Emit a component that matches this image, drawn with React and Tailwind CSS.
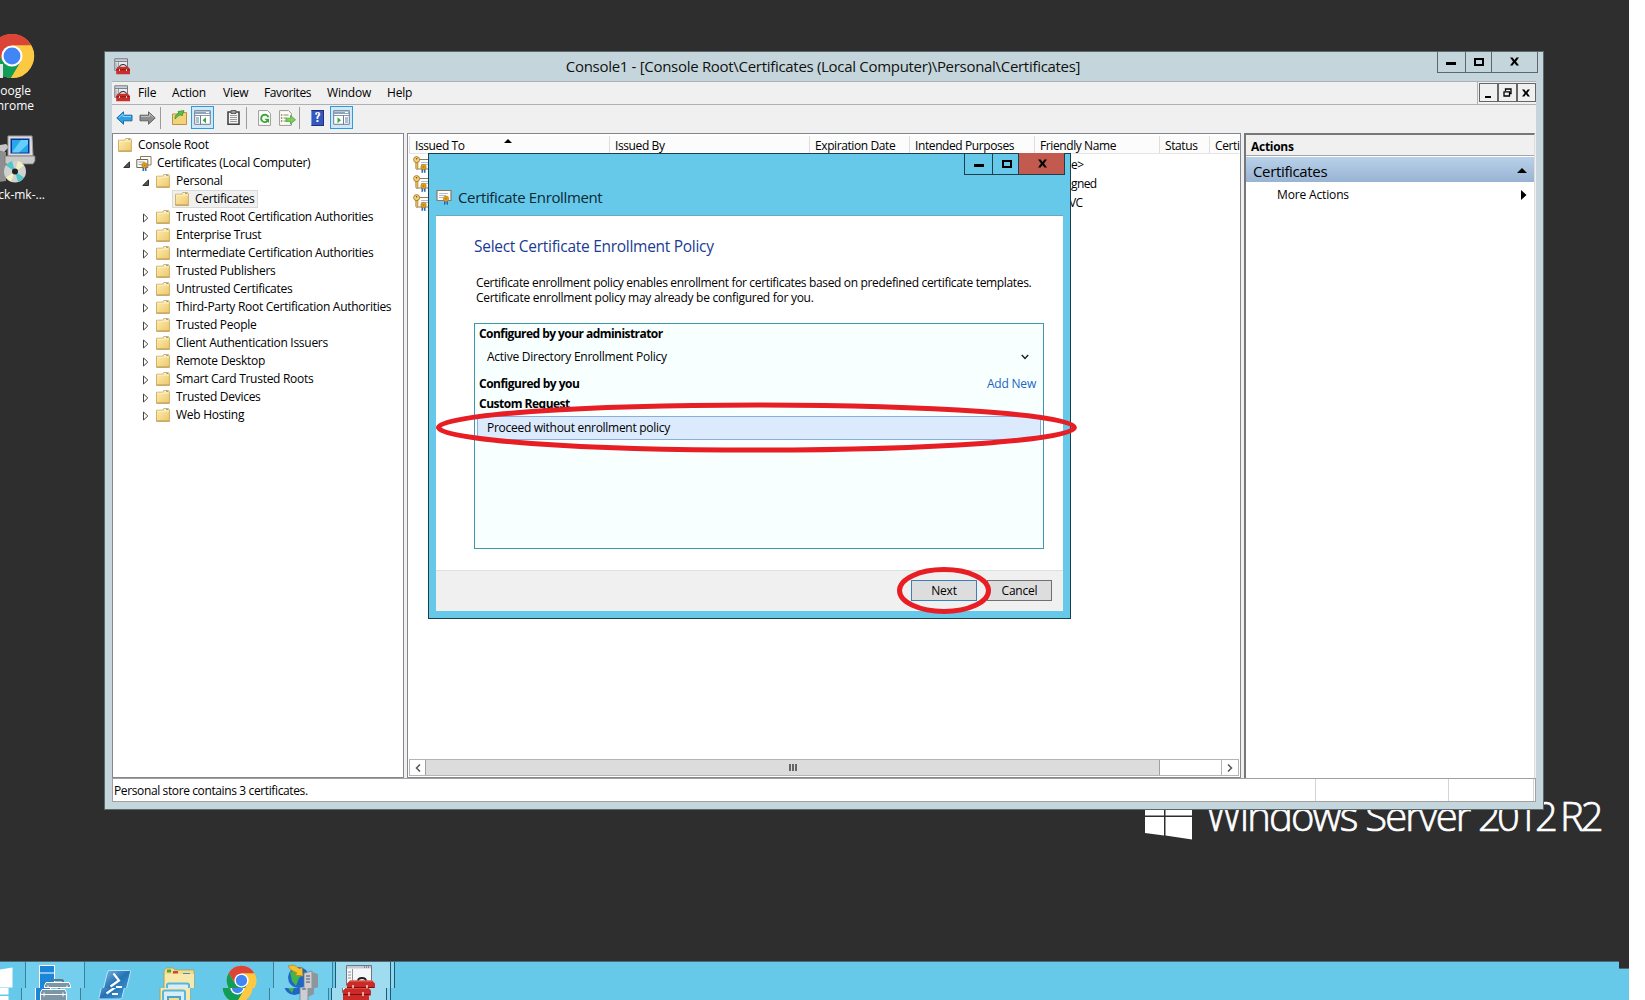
import React from "react";

function Folder() {
  return (
    <svg width="14" height="14" viewBox="0 0 14 14" className="shrink-0">
      <defs>
        <linearGradient id="fold" x1="0" y1="0" x2="1" y2="1">
          <stop offset="0" stopColor="#fcefb4" />
          <stop offset="1" stopColor="#eec76a" />
        </linearGradient>
      </defs>
      <path d="M.5 2.200h6.300l1-1.700h4.700l.9 1.200v11.400H.5z" fill="url(#fold)" stroke="#cfa95a" strokeWidth=".9" />
      <path d="M8.300 1.300h3.500v1H8z" fill="#fff" />
      <path d="M10.300 1.100h1.500v1h-1.500z" fill="#5b93c4" />
      <path d="M1 3.200h12" stroke="#fdf4cc" strokeWidth=".8" />
      <path d="M.4 13.200h13.200" stroke="#b08a45" strokeWidth=".8" />
    </svg>
  );
}

function Ribbon({ x, y }) {
  return (
    <g transform={`translate(${x} ${y})`}>
      <path d="M-2 1.500v5l1.600-1.200v-3zM2 1.500v5l-1.600-1.200v-3z" fill="#2e67b5" />
      <circle r="2.700" fill="#e0a21a" stroke="#b57b10" strokeWidth=".6" />
      <circle r=".9" fill="#c07d0a" />
    </g>
  );
}

function CertStack() {
  return (
    <svg width="16" height="16" viewBox="0 0 16 16" className="shrink-0">
      <path d="M4.500 1.500h10.500v8.500h-10.500z" fill="#fff" stroke="#8a7a5c" />
      <path d="M.8 4.500h11v8h-11z" fill="#fdfbf4" stroke="#6f665a" />
      <path d="M2.500 7h6M2.500 9.500h4" stroke="#9aa4b8" />
      <Ribbon x={8.500} y={10.300} />
    </svg>
  );
}

function Cert() {
  return (
    <svg width="17" height="16" viewBox="0 0 17 16" className="shrink-0">
      <path d="M1 1.500h14v10h-14z" fill="#fffdf7" stroke="#8b7866" strokeWidth="1.200" />
      <path d="M3 4.500h9M3 6.500h7M3 8.500h4" stroke="#a9b4d4" strokeWidth=".9" />
      <Ribbon x={10} y={9.700} />
    </svg>
  );
}

function KeyCert() {
  return (
    <svg width="17" height="17" viewBox="0 0 17 17" className="shrink-0">
      <path d="M3.500 3.500h14v9.500h-14z" fill="#fffdf7" stroke="#8b7866" />
      <path d="M8 6.500h8M8 8.500h8" stroke="#a9b4d4" strokeWidth=".9" />
      <path d="M2.800 6h2v6.500l-1 1-1-1.200z" fill="#f2c866" stroke="#9c6d22" strokeWidth=".7" />
      <circle cx="3.600" cy="3.600" r="3" fill="#f6cf75" stroke="#9c6d22" strokeWidth=".8" />
      <circle cx="3.600" cy="2.800" r=".8" fill="#7a4f12" />
      <Ribbon x={10.500} y={11} />
    </svg>
  );
}

function Toolbox() {
  return (
    <svg width="17" height="17" viewBox="0 0 17 17" className="shrink-0">
      <path d="M.8.800h12.700v11.500H.8z" fill="#e9ecef" stroke="#70767e" />
      <path d="M1 3.500h12.500" stroke="#7b828b" />
      <path d="M1 2h12" stroke="#a7afb9" />
      <path d="M4.500 4v8M1.500 6h2M1.500 8h2M1.500 10h2" stroke="#8c949e" strokeWidth=".9" />
      <path d="M5.500 9q0-2.500 3.500-2.500t3.500 2.500" fill="none" stroke="#222" />
      <path d="M3.500 8.800h10.500l2 2.200v5.200H2.200V11z" fill="#c9302c" />
      <path d="M2.200 11.800h13.800" stroke="#8d1512" />
      <path d="M5.500 11.200v1.800M12.500 11.200v1.800" stroke="#f2dcd8" />
    </svg>
  );
}

function Chrome({ size }) {
  return (
    <svg width={size} height={size} viewBox="0 0 48 48" className="shrink-0">
      <circle cx="24" cy="24" r="23" fill="#fbc02d" />
      <path d="M24 13h20.100A23 23 0 0 0 4.100 12.500l10.300 17z" fill="#db4437" />
      <path d="M4.100 12.500A23 23 0 0 0 23 47l10.500-17.500L24 35l-10-6z" fill="#0f9d58" />
      <path d="M24 13h20.200A23 23 0 0 1 23 47l10.500-17.500z" fill="#fdc943" />
      <circle cx="24" cy="24" r="11" fill="#fff" />
      <circle cx="24" cy="24" r="8.800" fill="#4285f4" />
    </svg>
  );
}

function Installer() {
  return (
    <svg width="48" height="50" viewBox="0 0 48 50">
      <path d="M0 14l18 3v29l-18 2z" fill="#8e8e8e" />
      <path d="M0 12l18-3 3 3-5 5z" fill="#c5c5c5" />
      <path d="M20 1h24l1 20H20z" fill="#dcdcda" stroke="#9a9a98" />
      <path d="M22.500 3.500h19v15h-19z" fill="#0b2f9a" />
      <path d="M24 5h16v12.500H24z" fill="#27a6ea" />
      <path d="M24 17.500l9-12.500h7v4l-9 8.500z" fill="#7fe3ff" opacity=".7" />
      <path d="M17 21h30v5l-2 3H17z" fill="#c9c9c6" stroke="#777" strokeWidth=".8" />
      <circle cx="27" cy="36.500" r="11" fill="#cfd2d0" />
      <path d="M27 36.500L18 30.500a11 11 0 0 1 6-4.500z" fill="#4fc6c8" />
      <path d="M27 36.500l9 6a11 11 0 0 1-6 4.500z" fill="#4fc6c8" />
      <path d="M27 36.500l3-10.500a11 11 0 0 1 6 4.500z" fill="#f3f0c0" />
      <path d="M27 36.500l-4 10a11 11 0 0 1-5-4z" fill="#f3f0c0" />
      <circle cx="27" cy="36.500" r="3" fill="#222" />
    </svg>
  );
}

const MinGlyph = () => <span className="mt-1 h-[3px] w-2.5 bg-black" />;
const MaxGlyph = () => <span className="h-2 w-2.5 border-2 border-black" />;
const XGlyph = ({ s = 9 }) => (
  <svg width={s} height={s} viewBox="0 0 9 9">
    <path d="M0 .5h2.600L4.500 3 6.400.5H9L6 4.500 9 8.500H6.400L4.500 6l-1.900 2.500H0L3 4.500z" fill="#000" />
  </svg>
);

function Caption({ border, close }) {
  return (
    <div className={`flex h-[22px] divide-x border border-t-0 ${border}`}>
      <div className="flex w-[28px] items-center justify-center"><MinGlyph /></div>
      <div className={`flex w-[26px] items-center justify-center pl-0.5 ${border}`}><MaxGlyph /></div>
      <div className={`flex w-[45px] items-center justify-center pl-px ${border} ${close}`}><XGlyph /></div>
    </div>
  );
}

const stores = [
  "Trusted Root Certification Authorities",
  "Enterprise Trust",
  "Intermediate Certification Authorities",
  "Trusted Publishers",
  "Untrusted Certificates",
  "Third-Party Root Certification Authorities",
  "Trusted People",
  "Client Authentication Issuers",
  "Remote Desktop",
  "Smart Card Trusted Roots",
  "Trusted Devices",
  "Web Hosting",
];

const Open = () => (
  <svg width="7" height="7" viewBox="0 0 7 7" className="mt-0.5"><path d="M6.500.8v5.700H.8z" fill="#555" stroke="#222" strokeWidth=".9" /></svg>
);
const Closed = () => (
  <svg width="7" height="10" viewBox="0 0 7 10" className="mt-0.5"><path d="M1.500 1v8L5.800 5z" fill="#fff" stroke="#444" /></svg>
);

function Tree() {
  return (
    <div className="h-full w-[292px] whitespace-nowrap border border-[#828790] bg-white pt-0.5">
      <div className="flex h-[18px] items-center gap-1.5 pl-[5px]"><Folder />Console Root</div>
      <div className="flex h-[18px] items-center pl-2.5"><Open /><span className="ml-1.5 mr-[5px]"><CertStack /></span>Certificates (Local Computer)</div>
      <div className="flex h-[18px] items-center pl-[29px]"><Open /><span className="ml-[7px] mr-1.5"><Folder /></span>Personal</div>
      <div className="flex h-[18px] pl-[59px]">
        <div className="flex w-[86px] items-center gap-1.5 border border-[#d9d9d9] bg-[#f0f0f0] pl-0.5"><Folder />Certificates</div>
      </div>
      {stores.map((s) => (
        <div key={s} className="flex h-[18px] items-center pl-[29px]"><Closed /><span className="ml-[7px] mr-1.5"><Folder /></span>{s}</div>
      ))}
    </div>
  );
}

const cols = "grid grid-cols-[200px_200px_100px_125px_125px_50px_31px]";
const heads = ["Issued To", "Issued By", "Expiration Date", "Intended Purposes", "Friendly Name", "Status", "Certi"];

function List() {
  return (
    <div className="flex h-full w-[834px] flex-col border border-[#828790] bg-white pl-px pr-px pt-0.5">
      <div className={`${cols} relative h-[18px] border-b border-[#e5e5e5] bg-[#fcfcfc]`}>
        {heads.map((h) => (
          <div key={h} className="flex items-center overflow-hidden whitespace-nowrap border-l border-[#dedede] pl-[5px] pt-0.5 tracking-[-0.4px]">{h}</div>
        ))}
        <svg width="8" height="4" viewBox="0 0 8 4" className="absolute left-[95px] top-[3px]"><path d="M0 4l4-4 4 4z" /></svg>
      </div>
      <div className="pt-px">
        {["e>", "gned", "VC"].map((t, i) => (
          <div key={t} className={`${cols} h-[19px] items-center`}>
            <div className="pl-1"><KeyCert /></div>
            <div className={`col-start-5 tracking-[-0.6px] ${i === 2 ? "pl-[35px]" : "pl-[37px]"}`}>{t}</div>
          </div>
        ))}
      </div>
      <div className="mt-auto mb-px flex h-[17px] items-stretch border border-[#b4b4b4] bg-white">
        <div className="flex w-[15px] items-center justify-center">
          <svg width="6" height="8" viewBox="0 0 6 8"><path d="M5 .5L1.500 4 5 7.500" fill="none" stroke="#555" strokeWidth="1.500" /></svg>
        </div>
        <div className="flex w-[735px] items-center justify-center gap-px border-x border-[#a0a0a0] bg-[#dcdcdc]">
          <span className="h-[7px] w-0.5 bg-[#666]" /><span className="h-[7px] w-0.5 bg-[#666]" /><span className="h-[7px] w-0.5 bg-[#666]" />
        </div>
        <div className="ml-auto flex w-[17px] items-center justify-center border-l border-[#b4b4b4]">
          <svg width="6" height="8" viewBox="0 0 6 8"><path d="M1 .5L4.500 4 1 7.500" fill="none" stroke="#555" strokeWidth="1.500" /></svg>
        </div>
      </div>
    </div>
  );
}

function Actions() {
  return (
    <div className="h-full w-[291px] border-l-2 border-t-2 border-r border-[#777] border-r-[#ddd] bg-white">
      <div className="flex h-[21px] items-center border-b border-[#a5a5a5] bg-[#f0f0f0] pl-[5px] pt-[3px] font-bold">Actions</div>
      <div className="mt-px flex h-[25px] items-center justify-between bg-gradient-to-b from-[#b9d1ea] to-[#98b4d3] pl-[7px] pr-[7px] pt-0.5 text-[15px] tracking-[-0.35px]">
        Certificates
        <svg width="10" height="5" viewBox="0 0 10 5"><path d="M0 5l5-5 5 5z" /></svg>
      </div>
      <div className="flex h-[23px] items-center justify-between pl-[31px] pr-[7px] pt-0.5 tracking-[-0.15px]">
        More Actions
        <svg width="6" height="10" viewBox="0 0 6 10"><path d="M0 0l5.500 5L0 10z" /></svg>
      </div>
    </div>
  );
}

function PaneIcon({ right }) {
  return (
    <svg width="17" height="15" viewBox="0 0 17 15">
      <path d="M.7.700h15.600v13.600H.7z" fill="#fff" stroke="#6d7d90" />
      <path d="M1 1.500h15v2.500H1z" fill="#8fa3ba" />
      <path d="M12 2.500h3" stroke="#fff" />
      <path d="M1 5.500h15" stroke="#6d7d90" strokeWidth=".8" />
      <path d={right ? "M10.500 5.500v9" : "M6.500 5.500v9"} stroke="#6d7d90" />
      <path d={right ? "M12 8h3M12 10h3M12 12h3" : "M2 8h3M2 10h3M2 12h3"} stroke="#5f7fb0" />
      <path d={right ? "M4.500 7.200v6L8 10.200z" : "M12 7.200v6l-3.500-3z"} fill="#3fa53a" />
    </svg>
  );
}

const Sep = () => <span className="h-[22px] w-px bg-[#9c9c9c]" />;

function Toolbar() {
  return (
    <div className="flex h-[29px] items-start bg-[#f0f0f0] pl-1 pt-px">
      <div className="flex h-[23px] items-center">
        <svg width="17" height="14" viewBox="0 0 17 14"><path d="M.8 7L7.500.8v3.400H16v5.600H7.500v3.400z" fill="#2ba3e6" stroke="#2468a0" /><path d="M3 6.500l4-3.500v2.500h8" fill="none" stroke="#8ad4fa" /></svg>
        <svg width="17" height="14" viewBox="0 0 17 14" className="ml-1.5"><path d="M16.200 7L9.500.8v3.400H1v5.600h8.500v3.400z" fill="#8c8c8c" stroke="#636363" /><path d="M2 5.500h8.500V3l4 3.500" fill="none" stroke="#bdbdbd" /></svg>
        <span className="ml-1 mr-[11px] flex"><Sep /></span>
        <svg width="15" height="15" viewBox="0 0 15 15"><path d="M.5 4h5l1.500-1.500h7.500v12H.5z" fill="#f3d27c" stroke="#b8924a" /><path d="M3 9c0-4 1.500-5 4-5.500L6 1.500 12 .5 10 6 9 4.800C6 5.500 5.500 7 3 9z" fill="#5cc143" stroke="#2f8d24" strokeWidth=".7" /></svg>
        <div className="ml-1 flex size-[23px] items-center justify-center border border-[#3399dd] bg-[#cfe8f8]"><PaneIcon /></div>
        <svg width="13" height="15" viewBox="0 0 13 15" className="ml-[13px]"><path d="M1 2h11v12.200H1z" fill="#f4f4f4" stroke="#444" strokeWidth="1.600" /><path d="M4 .5h5v3H4z" fill="#999" stroke="#444" strokeWidth=".8" /><path d="M3 5.500h7M3 7.500h7M3 9.500h7M3 11.500h7" stroke="#999" /></svg>
        <span className="ml-1.5 mr-[11px] flex"><Sep /></span>
        <svg width="13" height="16" viewBox="0 0 13 16"><path d="M.6.600h9l2.800 3v11.800H.6z" fill="#fff" stroke="#9a9a9a" /><path d="M9.700 10.800a3.700 3.700 0 1 1 .7-3.500" fill="none" stroke="#3aa535" strokeWidth="1.900" /><path d="M6.300 8.800h4.700v4.300z" fill="#3aa535" /></svg>
        <svg width="17" height="16" viewBox="0 0 17 16" className="ml-2"><path d="M.6.600h9l2.800 3v11.800H.6z" fill="#fffdf0" stroke="#9a9a9a" /><path d="M2 5h1.300M2 8h1.300M2 11h1.300" stroke="#333" /><path d="M4.500 5h5M4.500 8h3M4.500 11h4" stroke="#8a8a8a" /><path d="M7 8.200h4.500V5.500l5 4.300-5 4.200v-2.600H7z" fill="#7bd05e" stroke="#3c9a2e" strokeWidth=".7" /></svg>
        <span className="ml-[3px] mr-[11px] flex"><Sep /></span>
        <div className="flex h-4 w-[13px] items-center justify-center border border-[#1d2f7d] border-l-[#7a94e4] bg-[#3558bf] font-serif text-[13px] font-bold text-white">?</div>
        <div className="ml-1.5 flex size-[23px] items-center justify-center border border-[#3399dd] bg-[#cfe8f8]"><PaneIcon right /></div>
      </div>
    </div>
  );
}

function Console() {
  return (
    <div className="absolute left-[104px] top-[51px] flex h-[759px] w-[1440px] flex-col border border-[#59686d] bg-[#c4d6db] px-[7px] pb-[7px]">
      <div className="flex h-[29px] shrink-0 items-start justify-between">
        <div className="mt-1.5 w-[97px] pl-0.5"><Toolbox /></div>
        <div className="mt-0.5 text-[15px] leading-6 tracking-[-0.3px] text-[#111]">Console1 - [Console Root\Certificates (Local Computer)\Personal\Certificates]</div>
        <div className="-mr-0.5 -mt-px"><Caption border="border-[#59686d] divide-[#59686d]" close="" /></div>
      </div>
      <div className="flex h-6 shrink-0 border-y border-[#adb1b4] bg-[#f0f0f0]">
        <div className="flex flex-1 items-center pl-0.5 tracking-[-0.2px]">
          <Toolbox />
          <span className="ml-[7px] w-[34px]">File</span>
          <span className="w-[51px]">Action</span>
          <span className="w-[41px]">View</span>
          <span className="w-[63px] tracking-[-0.4px]">Favorites</span>
          <span className="w-[60px]">Window</span>
          <span>Help</span>
        </div>
        <div className="flex border-l border-[#adb1b4] pl-px pt-px">
          {[
            <span className="mt-2 h-0.5 w-1.5 bg-black" />,
            <svg width="9" height="9" viewBox="0 0 9 9"><path d="M2.500 3V1h5.500v4.500H6.500M1 3.800h5.500V8H1z" fill="none" stroke="#000" strokeWidth="1.300" /></svg>,
            <XGlyph s={8} />,
          ].map((g, i) => (
            <div key={i} className="flex h-[19px] w-[19px] items-center justify-center border border-[#666] pr-px">{g}</div>
          ))}
        </div>
      </div>
      <Toolbar />
      <div className="flex h-[645px] shrink-0 gap-[3px] bg-[#f0f0f0]">
        <Tree />
        <List />
        <Actions />
      </div>
      <div className="flex h-6 shrink-0 border border-[#a0a0a0] bg-white">
        <div className="flex w-[1203px] items-center border-r border-[#d4d4d4] pl-px pt-0.5 tracking-[-0.38px]">Personal store contains 3 certificates.</div>
        <div className="w-[133px] border-r border-[#d4d4d4]" />
        <div className="w-[85px] border-r border-[#d4d4d4]" />
      </div>
    </div>
  );
}

function Dialog() {
  return (
    <div className="absolute left-[428px] top-[153px] flex h-[466px] w-[643px] flex-col border border-[#1d3f4c] bg-[#66c9ea] px-[7px] pb-[7px]">
      <div className="flex h-[61px] shrink-0 justify-between">
        <div className="mt-[31px] flex h-6 items-center gap-[5px] text-[15px] tracking-[-0.36px] text-[#0c2833]"><Cert />Certificate Enrollment</div>
        <div className="-mr-0.5 -mt-px"><Caption border="border-[#1d3f4c] divide-[#1d3f4c]" close="bg-[#c35a50]" /></div>
      </div>
      <div className="flex-1 border-t border-[#6aa9be] bg-white pl-[38px] pt-[18px]">
        <h1 className="text-[15.500px] leading-6 tracking-[-0.28px] text-[#1a3b93]">Select Certificate Enrollment Policy</h1>
        <p className="mt-[17px] whitespace-nowrap pl-0.5 leading-[15px] tracking-[-0.34px]">Certificate enrollment policy enables enrollment for certificates based on predefined certificate templates.<br /><span className="tracking-[-0.28px]">Certificate enrollment policy may already be configured for you.</span></p>
        <div className="mt-[18px] h-[226px] w-[570px] border border-[#4096ac] bg-[#f8ffff] px-0.5">
          <div className="flex h-5 items-center pl-0.5 font-bold tracking-[-0.55px]">Configured by your administrator</div>
          <div className="flex h-[26px] items-center justify-between pl-2.5 pr-3 tracking-[-0.25px]">
            Active Directory Enrollment Policy
            <svg width="8" height="6" viewBox="0 0 8 6"><path d="M.8 1L4 4.500 7.200 1" fill="none" stroke="#222" strokeWidth="1.500" /></svg>
          </div>
          <div className="flex h-7 items-center justify-between pl-0.5 pr-[5px] font-bold tracking-[-0.5px]">Configured by you<span className="font-normal tracking-[-0.2px] text-[#2066c0]">Add New</span></div>
          <div className="flex h-3 items-center pl-0.5 font-bold tracking-[-0.5px]">Custom Request</div>
          <div className="mt-1.5 flex h-6 items-center border border-[#89aeda] bg-[#dbeafc] pl-[9px]">Proceed without enrollment policy</div>
        </div>
      </div>
      <div className="flex h-[41px] shrink-0 items-start justify-end gap-2.5 border-t border-[#dfdfdf] bg-[#f0f0f0] pr-[11px] pt-[9px] tracking-[-0.2px]">
        <div className="flex h-[21px] w-[66px] items-center justify-center border border-[#3c7fb1] bg-[#dddddd]">Next</div>
        <div className="flex h-[21px] w-[65px] items-center justify-center border border-[#707070] bg-[#dddddd]">Cancel</div>
      </div>
    </div>
  );
}

function Marks() {
  return (
    <svg className="pointer-events-none absolute left-[430px] top-[395px]" width="655" height="225" viewBox="430 395 655 225" fill="none" stroke="#e81e25" strokeWidth="5">
      <ellipse cx="756.500" cy="427.500" rx="318" ry="22.500" />
      <ellipse cx="944" cy="590.500" rx="44.500" ry="21" />
    </svg>
  );
}

function Taskbar() {
  return (
    <div className="flex h-[39px] w-[1640px] shrink-0 border-t border-[#4b6a76] bg-[#66c9ea]">
      <div className="w-[25px]"><svg width="13" height="38" viewBox="0 0 13 38"><path d="M0 7.500L12.500 5.500V25.500H0zM0 27h12.500v11H0z" fill="#fff" /></svg></div>
      <div className="w-[60px] border-x border-[#3d7f97] bg-[#74cfee]">
        <svg width="58" height="38" viewBox="0 0 58 38">
          <path d="M13.500 3.500h15v33h-15z" fill="#1b86d8" stroke="#fff" /><path d="M13.500 11h15" stroke="#fff" />
          <path d="M27 21v-2q0-1 1.500-1h7q1.500 0 1.500 1v2" fill="none" stroke="#5f7482" strokeWidth="2" />
          <path d="M20 20.500h23l1.500 3v13H18.500v-13z" fill="#7d96a5" stroke="#fff" /><path d="M19 25.500h25" stroke="#fff" /><path d="M22 23.500v4M41 23.500v4" stroke="#fff" />
        </svg>
      </div>
      <div className="w-[70px] pl-3">
        <svg width="38" height="38" viewBox="0 0 38 38">
          <defs><linearGradient id="ps" x1="0" y1="0" x2="1" y2="1"><stop offset="0" stopColor="#7bb8e4" /><stop offset=".5" stopColor="#2572b4" /><stop offset="1" stopColor="#3f9bd8" /></linearGradient></defs>
          <path d="M12 8.500h20.500q1.500 0 1 1.500l-4.500 18.500q-.4 1.500-2 1.500H7q-1.500 0-1-1.500L10.500 10q.3-1.500 1.500-1.500z" fill="url(#ps)" stroke="#b9e2f7" />
          <path d="M16.500 11.500l5.500 7-8.500 6M19 25h6" fill="none" stroke="#fff" strokeWidth="2.200" />
        </svg>
      </div>
      <div className="w-[65px] pl-1.5">
        <svg width="36" height="38" viewBox="0 0 36 38">
          <path d="M3 9l2-3h7l2 2h19v29H3z" fill="#f2dd8d" stroke="#b59a4d" strokeWidth=".8" />
          <path d="M6 7.500h4v3H6z" fill="#46a83c" /><path d="M12 9h5v2.500h-5z" fill="#d04a2c" /><path d="M22 11h7v2.500h-7z" fill="#3d8ad0" />
          <path d="M4 12h29v25H4z" fill="#f7e9ab" />
          <path d="M6 38V23q0-1.500 2-1.500h18q2 0 2 1.500v15" fill="#d5eefa" stroke="#5bb6dc" strokeWidth="2" />
          <path d="M11 38V28h12v10" fill="#f2dd8d" stroke="#4ba3cb" strokeWidth="2" />
        </svg>
      </div>
      <div className="w-[53px] pl-1.5 pt-[3px]"><Chrome size={31} /></div>
      <div className="w-[60px] border-x border-[#3d7f97] bg-[#74cfee]">
        <svg width="58" height="38" viewBox="0 0 58 38">
          <circle cx="24.500" cy="15.500" r="10.500" fill="#2166c4" /><path d="M16 10l8-2 5 5-4 3-3 8-4-5z" fill="#42b649" />
          <path d="M14 4l6-1 6 4 2-2 1 9-8-1 2-2-6-3z" fill="#f6c22c" stroke="#b67f12" strokeWidth=".7" />
          <path d="M30 11l8-2v29h-8z" fill="#c9cfd4" stroke="#777" strokeWidth=".7" /><path d="M38 10l6 2v13l-6 3z" fill="#8e969c" />
          <path d="M32 14h4M32 17h4M32 20h4" stroke="#4c5358" />
        </svg>
      </div>
      <div className="ml-0.5 w-[56px] border border-t-0 border-[#1f5a70] bg-[#a0dcf0]">
        <svg width="54" height="38" viewBox="0 0 54 38">
          <path d="M10.500 3.500h25v20h-25z" fill="#f6f7f8" stroke="#70767e" /><path d="M11 4h24v2.500H11z" fill="#c3cad2" /><path d="M28 5h6" stroke="#555" strokeDasharray="1 1" />
          <path d="M16.500 7v16M12 10h3M12 13h3M12 16h3" stroke="#8c949e" />
          <path d="M22 19q0-3 4-3t4 3" fill="none" stroke="#222" strokeWidth="1.800" />
          <path d="M14 18.500h22l3 3v5h-2v10H11v-15z" fill="#cc2a27" /><path d="M11 25.500h27" stroke="#7c100e" /><path d="M17 23v4M31 23v4" stroke="#f3d4d0" strokeWidth="1.500" /><path d="M14 19h22" stroke="#ea6c66" />
        </svg>
      </div>
      <div className="w-1 border-r border-[#1f5a70] bg-[#8fd6ef]" />
    </div>
  );
}

export default function App() {
  return (
    <div className="relative h-[1000px] w-[1645px] overflow-hidden bg-white text-[12px] leading-4 tracking-[-0.28px] text-black [font-family:'Open_Sans','Noto_Sans',sans-serif]">
      <div className="relative h-full w-[1629px] overflow-hidden bg-[#2e2e2e]">
        <div className="absolute left-0 top-[33px] flex w-12 flex-col items-start tracking-normal text-white">
          <div className="-ml-[11px] flex items-end"><Chrome size={46} /></div>
          <div className="absolute left-0 top-[31px] h-[14px] w-[3px] bg-[#e6e6e6]" />
          <div className="mt-1 w-[31px] self-start text-right leading-[15px]"><span className="float-right">Google</span></div>
          <div className="w-[34px] leading-[15px]"><span className="float-right">Chrome</span></div>
          <div className="-ml-3 mt-[22px]"><Installer /></div>
          <div className="mt-0.5 w-[45px]"><span className="float-right whitespace-nowrap">check-mk-...</span></div>
        </div>
        <div className="absolute left-[1145px] top-[786px] flex items-start gap-[14px] text-white">
          <svg width="47" height="54" viewBox="0 0 47 54"><path d="M0 6l19-3v26.500H0zM20.500 3L47 0v29.500H20.500zM0 31h19v18.500L0 47zM20.500 31H47v22.500l-26.500-4z" fill="#fff" /></svg>
          <div className="flex whitespace-nowrap text-[40px] font-light leading-[60px] [-webkit-text-stroke:0.7px_white]">
            <span className="w-[272px] tracking-[-1.8px]">Windows Server</span>
            <span className="w-[82px] tracking-[-3.8px]">2012</span>
            <span className="tracking-[-3px]">R2</span>
          </div>
        </div>
        <Console />
        <Dialog />
        <Marks />
        <div className="absolute left-0 top-[961px] w-[1629px]">
          <div className="h-[27px] w-[1619px] overflow-hidden"><Taskbar /></div>
          <div className="h-3 overflow-hidden"><div className="-ml-1 -mt-5"><Taskbar /></div></div>
        </div>
        <div className="absolute right-0 top-[968px] h-5 w-2.5 border-t border-[#4b6a76] bg-[#66c9ea]" />
      </div>
    </div>
  );
}
